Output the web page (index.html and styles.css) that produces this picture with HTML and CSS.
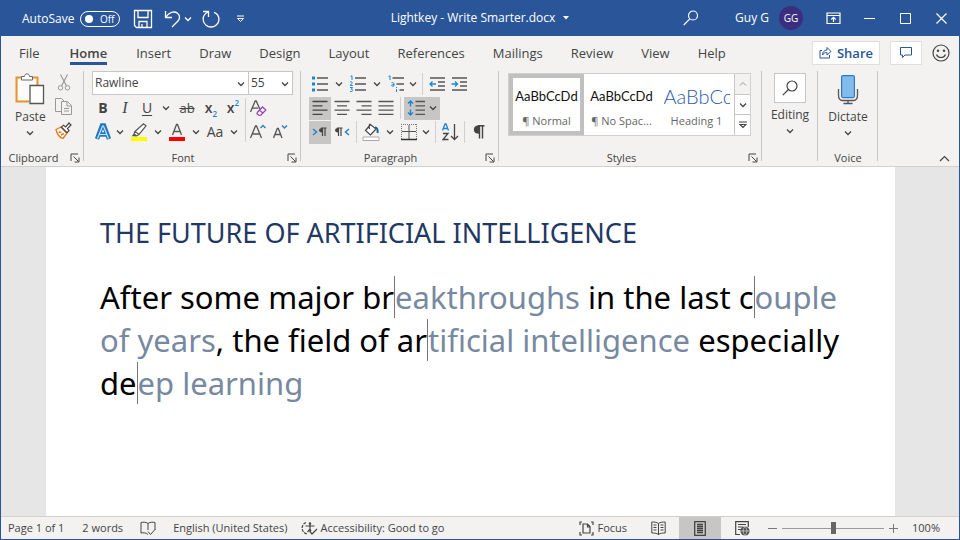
FILE: index.html
```html
<!DOCTYPE html>
<html lang="en">
<head>
	<meta charset="utf-8">
	<title>Lightkey - Write Smarter.docx</title>
	<link rel="stylesheet" href="styles.css">
</head>
<body>
	<svg class="defs" width="0" height="0">
		<symbol id="chevron" viewBox="0 0 8 8"><path d="M1 2.500 4 5.500 7 2.500" fill="none" stroke="currentColor" stroke-width="1.300"/></symbol>
		<symbol id="launcher" viewBox="0 0 10 10"><path d="M1 8V1h7M3.500 3.500l5 5M9 4.500V9H4.500" fill="none" stroke="currentColor"/></symbol>
	</svg>

	<header class="title-bar">
		<div class="quick-access">
			<label for="autosave">AutoSave</label>
			<span class="switch"><input type="checkbox" id="autosave"><span>Off</span></span>
			<button class="save" aria-label="Save">
				<svg width="20" height="20" viewBox="0 0 20 20"><path d="M1.500 1.500h17v17h-15l-2-2zM5 1.500v7h10v-7M6 18.500v-6h8v6M9 18v-3" fill="none" stroke="currentColor" stroke-width="1.300"/></svg>
			</button>
			<button class="undo" aria-label="Undo">
				<svg width="18" height="18" viewBox="0 0 18 18"><path d="M1.500 1v6.500H8M1.500 7.500C5 2.500 10 .5 13.500 3.200c3 2.400 2.400 6 0 8.300L8 17" fill="none" stroke="currentColor" stroke-width="1.300"/></svg>
			</button>
			<button class="drop" aria-label="Undo list"><svg width="8" height="8"><use href="#chevron"/></svg></button>
			<button class="redo" aria-label="Redo">
				<svg width="18" height="18" viewBox="0 0 18 18"><path d="M1 1.500h5.500V7M6.500 2C2.500 3.500.8 7 1.300 10.500 2 14.500 5.500 17 9 17s8-3 8-7.500c0-3.500-2-6-5-7.200" fill="none" stroke="currentColor" stroke-width="1.300"/></svg>
			</button>
			<button class="customize" aria-label="Customize toolbar">
				<svg width="9" height="8" viewBox="0 0 9 8"><path d="M1 1h7M1.500 3.500l3 3 3-3z" fill="none" stroke="currentColor"/></svg>
			</button>
		</div>
		<button class="doc-name">Lightkey - Write Smarter.docx <svg width="6" height="4" viewBox="0 0 6 4"><path d="M0 0h6L3 3.500z" fill="currentColor"/></svg></button>
		<div class="window-tools">
			<button class="search" aria-label="Search">
				<svg width="16" height="16" viewBox="0 0 16 16"><circle cx="10" cy="5.500" r="4.500" fill="none" stroke="currentColor" stroke-width="1.200"/><path d="M6.800 8.800.8 15" stroke="currentColor" stroke-width="1.200"/></svg>
			</button>
			<span class="user">Guy G</span>
			<button class="avatar">GG</button>
			<button class="win-btn" aria-label="Ribbon display options">
				<svg width="15" height="13" viewBox="0 0 15 13"><path d="M1 1h13v10.500H1zM1 3.500h13M7.500 10V5.500M5.300 7.500l2.200-2.200 2.200 2.200" fill="none" stroke="currentColor" stroke-width="1.200"/></svg>
			</button>
			<button class="win-btn" aria-label="Minimize"><svg width="11" height="11"><path d="M0 5.500h11" stroke="currentColor"/></svg></button>
			<button class="win-btn" aria-label="Maximize"><svg width="11" height="11"><path d="M.5.5h10v10H.5z" fill="none" stroke="currentColor"/></svg></button>
			<button class="win-btn" aria-label="Close"><svg width="11" height="11"><path d="M.5.5l10 10M10.500.5l-10 10" stroke="currentColor" stroke-width="1.200"/></svg></button>
		</div>
	</header>

	<nav class="tabs">
		<a href="#">File</a>
		<a href="#" class="active">Home</a>
		<a href="#">Insert</a>
		<a href="#">Draw</a>
		<a href="#">Design</a>
		<a href="#">Layout</a>
		<a href="#">References</a>
		<a href="#">Mailings</a>
		<a href="#">Review</a>
		<a href="#">View</a>
		<a href="#">Help</a>
		<div class="tab-actions">
			<button class="share">
				<svg width="13" height="13" viewBox="0 0 13 13"><path d="M3 4.500H1v7.500h9.500V9M3.500 9C3.500 6 5.500 4 8 4V1.500l4 4-4 3.500V6.500C6 6.500 4.500 7.300 3.500 9z" fill="none" stroke="currentColor"/></svg>
				Share
			</button>
			<button class="comment" aria-label="Comments">
				<svg width="12" height="12" viewBox="0 0 12 12"><path d="M.5.5h11v7.500H5L2.500 10.500V8h-2z" fill="none" stroke="currentColor"/></svg>
			</button>
			<button class="smile" aria-label="Feedback">
				<svg width="18" height="18" viewBox="0 0 18 18"><circle cx="9" cy="9" r="8" fill="none" stroke="currentColor" stroke-width="1.200"/><circle cx="6" cy="6.800" r="1.200" fill="currentColor"/><circle cx="12" cy="6.800" r="1.200" fill="currentColor"/><path d="M4.500 10.500c1.500 4 7.500 4 9 0" fill="none" stroke="currentColor" stroke-width="1.200"/></svg>
			</button>
		</div>
	</nav>

	<section class="ribbon">
		<div class="group clipboard">
			<div class="group-body">
				<button class="big">
					<svg width="30" height="32" viewBox="0 0 30 32"><path d="M7 4.500H1.500v24H14M17 4.500h5.500V12" fill="none" stroke="#e8912d" stroke-width="2"/><path d="M3 6h18v6h-6v15H3z" fill="#fafafa"/><path d="M6.500 7V3.500h3C9.500 0 14.500 0 14.500 3.500h3V7z" fill="#fff" stroke="#666"/><path d="M15 12.500h13.500v18H15z" fill="#fff" stroke="#555" stroke-width="1.300"/></svg>
					<span>Paste</span>
					<svg width="8" height="8"><use href="#chevron"/></svg>
				</button>
				<div class="stack">
					<button class="tool" aria-label="Cut">
						<svg width="14" height="17" viewBox="0 0 14 17"><path d="M3.500.5l6 11.500M10.500.5l-6 11.500" stroke="#999" stroke-width="1.200"/><circle cx="3.500" cy="13.800" r="2.200" fill="none" stroke="#999"/><circle cx="10.500" cy="13.800" r="2.200" fill="none" stroke="#999"/></svg>
					</button>
					<button class="tool" aria-label="Copy">
						<svg width="17" height="17" viewBox="0 0 17 17"><path d="M6 13.500H.5V.5h6L9 3M6.500 3.500h6l4 4v9h-10zM12 3.500V8h4M9 10.500h5M9 13h5" fill="none" stroke="#999"/></svg>
					</button>
					<button class="tool" aria-label="Format painter">
						<svg width="17" height="17" viewBox="0 0 17 17"><path d="M1 7.500l5-2.500 6 6-4 5.500c-3-1-6-4.500-7-9z" fill="#fff" stroke="#e27b1d" stroke-width="1.300"/><path d="M3.500 10l3 .5M6 13l3-1.500M6 5l6 6" stroke="#e27b1d" stroke-width="1.500"/><path d="M6.500 5.200l2-2 2.200 1.800L14 1l2 2-3.500 3.600 1.500 2-2 2z" fill="#fff" stroke="#444" stroke-width="1.200"/></svg>
					</button>
				</div>
			</div>
			<div class="group-foot"><span>Clipboard</span><button class="launch" aria-label="Clipboard options"><svg width="10" height="10"><use href="#launcher"/></svg></button></div>
		</div>

		<div class="group font">
			<div class="group-body column">
				<div class="combos">
					<div class="combo family"><select aria-label="Font"><option>Rawline</option></select><svg width="8" height="8"><use href="#chevron"/></svg></div>
					<div class="combo size"><select aria-label="Font size"><option>55</option></select><svg width="8" height="8"><use href="#chevron"/></svg></div>
				</div>
				<div class="font-tools">
					<div class="font-main">
						<div class="row">
							<button class="tool bold">B</button>
							<button class="tool italic">I</button>
							<button class="tool underline">U</button>
							<button class="drop wide" aria-label="Underline style"><svg width="8" height="8"><use href="#chevron"/></svg></button>
							<button class="tool wide strike">ab</button>
							<button class="tool script">x<sub>2</sub></button>
							<button class="tool script">x<sup>2</sup></button>
						</div>
						<div class="row">
							<button class="tool" aria-label="Text effects">
								<svg width="18" height="18" viewBox="0 0 18 18"><path d="M3 16 8 2.500h2L15 16M5 11.500h8" fill="none" stroke="#1f77c4" stroke-width="4.400"/><path d="M3.500 15.500 8.500 3h1l5 12.500M5.500 11.500h7" fill="none" stroke="#cfe4f6" stroke-width="1.200"/></svg>
							</button>
							<button class="drop" aria-label="Effects list"><svg width="8" height="8"><use href="#chevron"/></svg></button>
							<button class="tool wide" aria-label="Highlight color">
								<svg width="18" height="18" viewBox="0 0 18 18"><path d="M5 8.500 13.500.8l2.500 2L9 11.500zM5 8.500l-1 2.500 2 2 3-1.500" fill="#fff" stroke="#555" stroke-width="1.200"/><path d="M4 10.500l-2.500 2.800h4l1-1z" fill="#555"/><path d="M1 14h16v4H1z" fill="#ff0"/></svg>
							</button>
							<button class="drop" aria-label="Highlight list"><svg width="8" height="8"><use href="#chevron"/></svg></button>
							<button class="tool wide" aria-label="Font color">
								<svg width="18" height="18" viewBox="0 0 18 18"><path d="M4.500 12 8.500 1.500h1L13.500 12M6 8.500h6" fill="none" stroke="#555" stroke-width="1.300"/><path d="M1 14h16v4H1z" fill="red"/></svg>
							</button>
							<button class="drop" aria-label="Font color list"><svg width="8" height="8"><use href="#chevron"/></svg></button>
							<button class="tool wide">Aa</button>
							<button class="drop" aria-label="Change case list"><svg width="8" height="8"><use href="#chevron"/></svg></button>
						</div>
					</div>
					<span class="sep"></span>
					<div class="font-side">
						<div class="row">
							<button class="tool" aria-label="Clear formatting">
								<svg width="18" height="18" viewBox="0 0 18 18"><path d="M1.500 13 6.200 2h1l3.600 8M3.200 9.200h6" fill="none" stroke="#555" stroke-width="1.300"/><path d="M8.500 13.200 13.500 8l3.300 3-5 5.200-1.800.2-2-1.700zM10.500 11l3.500 3.200" fill="#fff" stroke="#9a3fb5" stroke-width="1.300"/></svg>
							</button>
						</div>
						<div class="row">
							<button class="tool" aria-label="Grow font">
								<svg width="18" height="18" viewBox="0 0 18 18"><path d="M1.500 15 6.500 3h1l5 12M3.300 11h7.400" fill="none" stroke="#555" stroke-width="1.300"/><path d="M11.500 5 14 2.500 16.500 5" fill="none" stroke="#2a7fc1" stroke-width="1.400"/></svg>
							</button>
							<button class="tool" aria-label="Shrink font">
								<svg width="18" height="18" viewBox="0 0 18 18"><path d="M2.500 15 6.300 5.500h1L11 15M3.800 11.500h6" fill="none" stroke="#555" stroke-width="1.300"/><path d="M11 2.500 13.500 5 16 2.500" fill="none" stroke="#2a7fc1" stroke-width="1.400"/></svg>
							</button>
						</div>
					</div>
				</div>
			</div>
			<div class="group-foot"><span>Font</span><button class="launch" aria-label="Font options"><svg width="10" height="10"><use href="#launcher"/></svg></button></div>
		</div>

		<div class="group paragraph">
			<div class="group-body column">
				<div class="row">
					<button class="tool" aria-label="Bullets">
						<svg width="18" height="18" viewBox="0 0 18 18"><path d="M1 1.500h3v3H1zM1 7.500h3v3H1zM1 13.500h3v3H1z" fill="#1c86cf"/><path d="M6 3h11M6 9h11M6 15h11" stroke="#555" stroke-width="1.300"/></svg>
					</button>
					<button class="drop wide" aria-label="Bullet library"><svg width="8" height="8"><use href="#chevron"/></svg></button>
					<button class="tool" aria-label="Numbering">
						<svg width="18" height="18" viewBox="0 0 18 18"><path d="M1.500 1.500 3 .8V5M1 7.300c1-1 2.800-.4 2 .9L1.200 10.500h2.600M1 12.500h2.500L2.300 14.300c2 0 2 2.700-1.300 2.200" fill="none" stroke="#1c86cf"/><path d="M6 3h11M6 9h11M6 15h11" stroke="#555" stroke-width="1.300"/></svg>
					</button>
					<button class="drop wide" aria-label="Numbering library"><svg width="8" height="8"><use href="#chevron"/></svg></button>
					<button class="tool" aria-label="Multilevel list">
						<svg width="18" height="18" viewBox="0 0 18 18"><path d="M1.500 1.500 3 .8V5M4.500 8c1-.8 2.500-.4 2.500.8V11c-3 .8-3.500-1.500 0-1.500M9.500 14v3M9.500 12v1" fill="none" stroke="#1c86cf"/><path d="M5.500 3H17M9.500 9H17M12.500 15H17" stroke="#555" stroke-width="1.300"/></svg>
					</button>
					<button class="drop" aria-label="Multilevel library"><svg width="8" height="8"><use href="#chevron"/></svg></button>
					<span class="sep"></span>
					<button class="tool" aria-label="Decrease indent">
						<svg width="18" height="18" viewBox="0 0 18 18"><path d="M2 3h15M10 7h7M10 11h7M2 15h15" stroke="#555" stroke-width="1.300"/><path d="M8 9H2M4.500 6.500 2 9l2.500 2.500" fill="none" stroke="#1c86cf" stroke-width="1.300"/></svg>
					</button>
					<button class="tool" aria-label="Increase indent">
						<svg width="18" height="18" viewBox="0 0 18 18"><path d="M2 3h15M10 7h7M10 11h7M2 15h15" stroke="#555" stroke-width="1.300"/><path d="M1.500 9h6M5 6.500 7.500 9 5 11.500" fill="none" stroke="#1c86cf" stroke-width="1.300"/></svg>
					</button>
				</div>
				<div class="row">
					<button class="tool on" aria-label="Align left"><svg width="18" height="18" viewBox="0 0 18 18"><path d="M1.500 2.500h15M1.500 6.800h10M1.500 11.100h15M1.500 15.400h10" stroke="#444" stroke-width="1.300"/></svg></button>
					<button class="tool" aria-label="Center"><svg width="18" height="18" viewBox="0 0 18 18"><path d="M1.500 2.500h15M4 6.800h10M1.500 11.100h15M4 15.400h10" stroke="#555" stroke-width="1.300"/></svg></button>
					<button class="tool" aria-label="Align right"><svg width="18" height="18" viewBox="0 0 18 18"><path d="M1.500 2.500h15M6.500 6.800h10M1.500 11.100h15M6.500 15.400h10" stroke="#555" stroke-width="1.300"/></svg></button>
					<button class="tool" aria-label="Justify"><svg width="18" height="18" viewBox="0 0 18 18"><path d="M1.500 2.500h15M1.500 6.800h15M1.500 11.100h15M1.500 15.400h15" stroke="#555" stroke-width="1.300"/></svg></button>
					<span class="sep"></span>
					<button class="tool on spacing" aria-label="Line spacing">
						<svg width="18" height="18" viewBox="0 0 18 18"><path d="M3.500 2v5.500M3.500 10.500V16M1 4.500 3.500 2 6 4.500M1 13.500 3.500 16 6 13.500" fill="none" stroke="#1c86cf" stroke-width="1.400"/><path d="M8.500 2.500H18M8.500 6.800H18M8.500 11.100H18M8.500 15.400H18" stroke="#555" stroke-width="1.300"/></svg>
						<svg width="8" height="8"><use href="#chevron"/></svg>
					</button>
				</div>
				<div class="row">
					<button class="tool on" aria-label="Left to right">
						<svg width="18" height="18" viewBox="0 0 18 18"><path d="M2 6l3.500 3L2 12" fill="none" stroke="#1c86cf" stroke-width="1.500"/><path d="M11 5c-4 0-4 4.500 0 4.500z" fill="#444"/><path d="M11.500 5v8M14 5v8M10 5h5.500" fill="none" stroke="#444" stroke-width="1.200"/></svg>
					</button>
					<button class="tool" aria-label="Right to left">
						<svg width="18" height="18" viewBox="0 0 18 18"><path d="M16 6l-3.500 3 3.500 3" fill="none" stroke="#1c86cf" stroke-width="1.500"/><path d="M5 5C1 5 1 9.500 5 9.500z" fill="#444"/><path d="M5.500 5v8M8 5v8M4 5h5.500" fill="none" stroke="#444" stroke-width="1.200"/></svg>
					</button>
					<span class="sep"></span>
					<button class="tool" aria-label="Shading">
						<svg width="18" height="18" viewBox="0 0 18 18"><path d="M8.500 1.500 3.500 7.500l5 4.500 5.500-6zM8.500 1.500C7 .5 7 3 7.500 6" fill="#fff" stroke="#444" stroke-width="1.200"/><path d="M13 4.500c2 0 3 2 2.500 5.500" fill="none" stroke="#17639e" stroke-width="2"/><path d="M1 14h16v3.500H1z" fill="#fff" stroke="#aaa"/></svg>
					</button>
					<button class="drop wide" aria-label="Shading list"><svg width="8" height="8"><use href="#chevron"/></svg></button>
					<button class="tool" aria-label="Borders">
						<svg width="18" height="18" viewBox="0 0 18 18"><path d="M1.500 1v15M16.500 1v15M1 1.500h16" fill="none" stroke="#777" stroke-dasharray="1 1"/><path d="M9 2v14M2 8.500h14" stroke="#555"/><path d="M1 16.500h16" stroke="#333" stroke-width="1.500"/></svg>
					</button>
					<button class="drop" aria-label="Borders list"><svg width="8" height="8"><use href="#chevron"/></svg></button>
					<span class="sep"></span>
					<button class="tool" aria-label="Sort">
						<svg width="18" height="18" viewBox="0 0 18 18"><path d="M1.500 7.500 4 1h1l2.500 6.500M2.500 5.500h4" fill="none" stroke="#1c86cf" stroke-width="1.300"/><path d="M2 10.500h5L2 16.500h5.500M13.500 1v15.500M10 13l3.500 3.500L17 13" fill="none" stroke="#444" stroke-width="1.300"/></svg>
					</button>
					<span class="sep"></span>
					<button class="tool" aria-label="Show marks">
						<svg width="18" height="18" viewBox="0 0 18 18"><path d="M9 3C3 3 3 10 9 10zM9.500 2.500v13M12.500 2.500v13M8 2.700h6.500" fill="#444" stroke="#444" stroke-width="1.400"/></svg>
					</button>
				</div>
			</div>
			<div class="group-foot"><span>Paragraph</span><button class="launch" aria-label="Paragraph options"><svg width="10" height="10"><use href="#launcher"/></svg></button></div>
		</div>

		<div class="group styles">
			<div class="group-body">
				<div class="gallery">
					<button class="style selected"><span class="sample">AaBbCcDd</span><span>¶ Normal</span></button>
					<button class="style"><span class="sample">AaBbCcDd</span><span>¶ No Spac...</span></button>
					<button class="style"><span class="sample heading">AaBbCc</span><span>Heading 1</span></button>
					<div class="gallery-scroll">
						<button class="up" aria-label="Scroll up"><svg width="8" height="8" viewBox="0 0 8 8"><path d="M1 5.500 4 2.500 7 5.500" fill="none" stroke="currentColor"/></svg></button>
						<button aria-label="Scroll down"><svg width="8" height="8"><use href="#chevron"/></svg></button>
						<button aria-label="More styles"><svg width="8" height="8" viewBox="0 0 8 8"><path d="M0 1h8M1 3.500l3 3 3-3z" fill="none" stroke="currentColor" stroke-width="1.200"/></svg></button>
					</div>
				</div>
			</div>
			<div class="group-foot"><span>Styles</span><button class="launch" aria-label="Styles options"><svg width="10" height="10"><use href="#launcher"/></svg></button></div>
		</div>

		<div class="group editing">
			<div class="group-body">
				<button class="big">
					<span class="find"><svg width="16" height="16" viewBox="0 0 16 16"><circle cx="10" cy="6" r="5" fill="none" stroke="currentColor" stroke-width="1.200"/><path d="M6.500 9.500.8 15.200" stroke="currentColor" stroke-width="1.200"/></svg></span>
					<span>Editing</span>
					<svg width="8" height="8"><use href="#chevron"/></svg>
				</button>
			</div>
		</div>

		<div class="group voice">
			<div class="group-body">
				<button class="big">
					<svg width="22" height="32" viewBox="0 0 22 32"><rect x="4.600" y="2.600" width="12.800" height="22" rx="1.500" fill="#83bbec" stroke="#2b7bc4" stroke-width="1.200"/><path d="M1.500 16v6c0 3.500 1.500 5.500 4 5.500h11c2.500 0 4-2 4-5.500v-6M11 27.500v3M6.500 30.500h9" fill="none" stroke="#555" stroke-width="1.300"/></svg>
					<span>Dictate</span>
					<svg width="8" height="8"><use href="#chevron"/></svg>
				</button>
			</div>
			<div class="group-foot"><span>Voice</span></div>
		</div>

		<button class="collapse" aria-label="Collapse ribbon"><svg width="11" height="7" viewBox="0 0 11 7"><path d="M1 6l4.500-4.500L10 6" fill="none" stroke="currentColor" stroke-width="1.200"/></svg></button>
	</section>

	<main class="workspace">
		<article class="page">
			<h1>THE FUTURE OF ARTIFICIAL INTELLIGENCE</h1>
			<p>After some major br<span class="suggestion">eakthroughs</span> in the last c<span class="suggestion">ouple of years</span>, the field of ar<span class="suggestion">tificial intelligence</span> especially de<span class="suggestion">ep learning</span></p>
		</article>
	</main>

	<footer class="status-bar">
		<span class="pages">Page 1 of 1</span>
		<span class="words">2 words</span>
		<button class="proof" aria-label="Proofing">
			<svg width="16" height="15" viewBox="0 0 16 15"><path d="M8 2.500C6 1 3.500 1 1 1.500v10.500c2.500-.4 5-.4 7 1.500M8 2.500C10 1 12.500 1 15 1.500V9M8 2.500V9M8 10.500l2.500 3 4.500-5" fill="none" stroke="currentColor"/></svg>
		</button>
		<span>English (United States)</span>
		<button class="access">
			<svg width="17" height="15" viewBox="0 0 17 15"><path d="M5 1.500A6 6 0 0 0 6 13" fill="none" stroke="currentColor" stroke-width="1.200" stroke-dasharray="3 1"/><path d="M4.500 5h9M9 2.500V8M6.500 11 9 8l1 2M8.500 10l2.500 3 5-5" fill="none" stroke="currentColor" stroke-width="1.200"/><circle cx="9" cy="2.500" r="1.200" fill="currentColor"/></svg>
			Accessibility: Good to go
		</button>
		<div class="views">
			<button class="focus">
				<svg width="15" height="15" viewBox="0 0 15 15"><path d="M3 1H1v3M12 1h2v3M3 14H1v-3M12 14h2v-3M4 3h4.500L11 5.500V12H4zM8.500 3v3H11" fill="none" stroke="currentColor" stroke-width="1.200"/></svg>
				Focus
			</button>
			<button class="view" aria-label="Read mode">
				<svg width="15" height="14" viewBox="0 0 15 14"><path d="M7.500 2.500C5.500 1 3 1 .8 1v11c2.200 0 4.700 0 6.700 1.500C9.500 12 12 12 14.200 12V1C12 1 9.500 1 7.500 2.500zM7.500 2.500v11M2.500 4h3M2.500 6.500h3M2.500 9h3M9.500 4h3M9.500 6.500h3M9.500 9h3" fill="none" stroke="currentColor"/></svg>
			</button>
			<button class="view on" aria-label="Print layout">
				<svg width="12" height="15" viewBox="0 0 12 15"><path d="M.7.7h10.600v13.600H.7zM3 3.500h6M3 5.500h6M3 7.500h6M3 9.500h6M3 11.500h6" fill="none" stroke="currentColor" stroke-width="1.300"/></svg>
			</button>
			<button class="view" aria-label="Web layout">
				<svg width="15" height="15" viewBox="0 0 15 15"><path d="M5 13.500H.7V.7h12.600V6M3 3.500h8M3 6h5M3 8.500h3" fill="none" stroke="currentColor" stroke-width="1.200"/><circle cx="10" cy="10" r="4.600" fill="#505050"/><path d="M5.500 10h9M10 5.500c-2.500 3-2.500 6 0 9 2.500-3 2.500-6 0-9" fill="none" stroke="#ddd" stroke-width=".7"/></svg>
			</button>
			<button class="zoom-btn" aria-label="Zoom out"><svg width="9" height="9"><path d="M0 4.500h9" stroke="currentColor"/></svg></button>
			<input type="range" class="zoom" min="0" max="200" value="100" aria-label="Zoom">
			<button class="zoom-btn" aria-label="Zoom in"><svg width="9" height="9"><path d="M0 4.500h9M4.500 0v9" stroke="currentColor"/></svg></button>
			<span class="percent">100%</span>
		</div>
	</footer>
</body>
</html>
```

FILE: styles.css
```css
* {
	box-sizing: border-box;
}

body {
	font-family: 'Open Sans', 'Noto Sans', sans-serif;
	font-size: 12px;
	line-height: 16px;
	color: #444;
	background-color: #f3f2f1;
	margin: 0;
	min-height: 100vh;
	display: flex;
	flex-direction: column;
	border: 1px solid #2a5699;
	border-top: none;
}

button {
	font: inherit;
	color: inherit;
	background: none;
	border: none;
	padding: 0;
	display: flex;
	align-items: center;
	justify-content: center;
	white-space: nowrap;
	flex: none;
}

svg {
	display: block;
	flex: none;
}

.defs {
	position: absolute;
}

/* title bar */
.title-bar {
	background-color: #2a5699;
	color: #fff;
	height: 36px;
	display: grid;
	grid-template-columns: 1fr auto 1fr;
	align-items: center;
}

.quick-access {
	display: flex;
	align-items: center;
	padding-left: 21px;
	padding-top: 2px;
}

.switch {
	position: relative;
	width: 40px;
	height: 16px;
	margin-left: 6px;
}

.switch input {
	appearance: none;
	width: 40px;
	height: 16px;
	margin: 0;
	border: 1px solid #fff;
	border-radius: 8px;
	display: flex;
	align-items: center;
	padding-left: 4px;
}

.switch input::before {
	content: '';
	width: 8px;
	height: 8px;
	border-radius: 50%;
	background-color: #fff;
}

.switch span {
	position: absolute;
	right: 6px;
	top: 0;
	font-size: 10px;
}

.save {
	margin-left: 13px;
}

.undo {
	margin-left: 11px;
}

.drop {
	width: 12px;
	height: 22px;
}

.drop.wide {
	width: 16px;
}

.redo {
	margin-left: 8px;
}

.customize {
	margin-left: 16px;
}

.doc-name {
	font-size: 12px;
	gap: 8px;
}

.window-tools {
	display: flex;
	align-items: center;
	justify-content: flex-end;
}

.user {
	margin-left: 36px;
	margin-right: 10px;
}

.avatar {
	width: 24px;
	height: 24px;
	border-radius: 50%;
	background-color: #3b2e7e;
	font-size: 10px;
	margin-right: 12px;
}

.win-btn {
	width: 36px;
	height: 36px;
}

/* ribbon tabs */
.tabs {
	display: flex;
	align-items: center;
	gap: 28px;
	height: 32px;
	padding-top: 1px;
	padding-left: 18px;
	font-size: 13px;
}

.tabs a {
	color: #444;
	text-decoration: none;
	height: 24px;
	line-height: 24px;
}

.tabs a.active {
	font-weight: 600;
	margin: 0 1px 0 2px;
	border-bottom: 3px solid #2a5699;
}

.tab-actions {
	display: flex;
	align-items: center;
	gap: 10px;
	margin-left: auto;
	margin-right: 9px;
}

.share,
.comment {
	height: 24px;
	background-color: #fff;
	border: 1px solid #e1dfdd;
	color: #2a5699;
}

.share {
	width: 68px;
	gap: 5px;
	font-weight: 600;
}

.comment {
	width: 32px;
}

/* ribbon */
.ribbon {
	display: flex;
	height: 99px;
	padding: 3px 0 1px;
	border-bottom: 1px solid #d2d0ce;
}

.group {
	display: flex;
	flex-direction: column;
	flex: none;
	background: linear-gradient(#c8c6c4, #c8c6c4) right top / 1px 90px no-repeat;
}

.group-body {
	display: flex;
	flex: 1;
}

.group-body.column {
	flex-direction: column;
}

.group-foot {
	position: relative;
	text-align: center;
	font-size: 11px;
	height: 14px;
	line-height: 14px;
}

.launch {
	position: absolute;
	right: 4px;
	top: 2px;
}

.clipboard {
	width: 83px;
}

.clipboard .group-foot {
	padding-right: 18px;
}

.clipboard .group-body {
	padding-left: 14px;
}

.font {
	width: 217px;
	padding-left: 8px;
}

.paragraph {
	width: 198px;
	padding-left: 8px;
}

.paragraph .group-body {
	padding-top: 1px;
}

.styles {
	width: 263px;
	padding-left: 9px;
}

.font .group-foot,
.paragraph .group-foot,
.styles .group-foot {
	padding-right: 27px;
}

.editing {
	width: 56px;
}

.voice {
	width: 60px;
}

.editing .group-body,
.voice .group-body {
	justify-content: center;
}

.big {
	flex-direction: column;
	align-self: flex-start;
	gap: 4px;
	padding-top: 2px;
}

.find {
	width: 32px;
	height: 30px;
	background-color: #fff;
	border: 1px solid #c8c6c4;
	display: flex;
	align-items: center;
	justify-content: center;
}

.stack {
	display: flex;
	flex-direction: column;
	gap: 1px;
	margin-left: 7px;
}

.row {
	display: flex;
	align-items: center;
	height: 24px;
}

.tool {
	width: 22px;
	height: 23px;
	font-size: 14px;
}

.tool.wide {
	width: 26px;
}

.tool.on {
	background-color: #c8c6c4;
}

.tool.spacing {
	width: 36px;
	gap: 4px;
}

.sep {
	width: 1px;
	height: 22px;
	margin: 0 3px;
	background-color: #d2d0ce;
}

.bold {
	font-weight: bold;
}

.italic {
	font-family: 'Liberation Serif', serif;
	font-style: italic;
	font-size: 16px;
}

.underline {
	text-decoration: underline;
	text-underline-offset: 2px;
}

.strike {
	text-decoration: line-through;
	font-size: 13px;
}

.script {
	font-weight: 600;
}

.script sub,
.script sup {
	font-size: 8px;
	line-height: 8px;
	color: #1c86cf;
}

.script sub {
	align-self: flex-end;
	padding-bottom: 2px;
}

.script sup {
	align-self: flex-start;
	padding-top: 2px;
}

.combos {
	display: flex;
	height: 24px;
	margin: 0 8px 1px 0;
}

.combo {
	position: relative;
	border: 1px solid #c8c6c4;
	background-color: #fff;
}

.combo.family {
	width: 157px;
}

.combo.size {
	flex: 1;
	border-left: none;
}

.combo select {
	appearance: none;
	font: inherit;
	color: inherit;
	width: 100%;
	height: 100%;
	border: none;
	background: none;
	padding: 0 2px;
}

.combo svg {
	position: absolute;
	right: 3px;
	top: 8px;
	pointer-events: none;
}

.font-tools {
	display: flex;
}

.font-main {
	width: 152px;
}

.font-tools .sep {
	height: 44px;
	margin: 2px 1px;
}

.gallery {
	display: flex;
	height: 63px;
	margin-top: 2px;
	border: 1px solid #d2d0ce;
	background-color: #fff;
	align-self: flex-start;
}

.style {
	width: 75px;
	flex-direction: column;
	gap: 9px;
	padding-top: 7px;
	overflow: hidden;
	color: #666;
	font-size: 11px;
}

.style.selected {
	border: 4px solid #c0c0c0;
}

.sample {
	font-family: Lato, sans-serif;
	font-size: 13px;
	color: #111;
}

.sample.heading {
	font-size: 20px;
	font-weight: 300;
	color: #2f5ba8;
	width: 66px;
	overflow: hidden;
}

.gallery-scroll {
	display: flex;
	flex-direction: column;
	width: 16px;
	border-left: 1px solid #c8c6c4;
}

.gallery-scroll button {
	flex: 1;
	border-top: 1px solid #c8c6c4;
}

.gallery-scroll .up {
	border-top: none;
	color: #999;
	background-color: #f3f2f1;
}

.collapse {
	margin-left: auto;
	margin-right: 9px;
	margin-bottom: 3px;
	align-self: flex-end;
}

/* document */
.workspace {
	flex: 1;
	display: flex;
	background-color: #e6e6e6;
	padding: 0 64px 0 45px;
}

.page {
	flex: 1;
	background-color: #fff;
	padding: 47px 48px 0 54px;
	font-family: 'Noto Sans', sans-serif;
	font-variant-ligatures: none;
	color: #000;
}

.page h1 {
	margin: 0;
	font-size: 27px;
	font-weight: normal;
	line-height: 38px;
	color: #1f3864;
}

.page p {
	margin: 24px 0 0;
	font-size: 31px;
	line-height: 43px;
}

.suggestion {
	color: #7789a0;
	border-left: 1px solid #777;
}

/* status bar */
.status-bar {
	display: flex;
	align-items: center;
	height: 23px;
	padding-left: 7px;
	border-top: 1px solid #d2d0ce;
	font-size: 11px;
}

.words {
	margin-left: 18px;
}

.proof {
	margin: 0 17px;
}

.access {
	margin-left: 14px;
	gap: 2px;
}

.views {
	display: flex;
	align-items: center;
	margin-left: auto;
	padding-right: 19px;
}

.focus {
	gap: 3px;
	margin-right: 10px;
}

.view {
	width: 42px;
	height: 22px;
}

.view.on {
	background-color: #c8c6c4;
}

.zoom-btn {
	margin: 0 5px;
	color: #777;
}

.zoom {
	appearance: none;
	width: 102px;
	height: 12px;
	margin: 0;
	background: linear-gradient(#999, #999) center / 100% 1px no-repeat;
}

.zoom::-webkit-slider-thumb {
	appearance: none;
	width: 5px;
	height: 12px;
	background-color: #666;
}

.percent {
	margin-left: 9px;
}
```
